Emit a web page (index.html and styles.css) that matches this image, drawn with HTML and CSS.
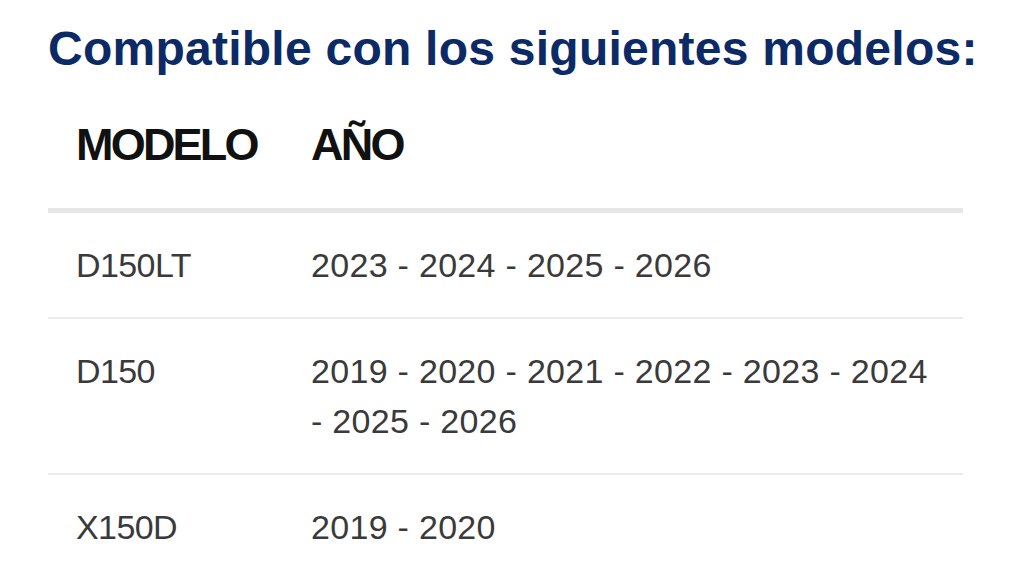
FILE: index.html
```html
<!DOCTYPE html>
<html lang="es">
<head>
<meta charset="utf-8">
<title>Compatible con los siguientes modelos</title>
<link rel="stylesheet" href="styles.css">
</head>
<body>
<section class="compat">
  <h1 class="compat-title">Compatible con los siguientes modelos:</h1>
  <table class="compat-table">
    <thead>
      <tr>
        <th class="col-model">MODELO</th>
        <th class="col-year">AÑO</th>
      </tr>
    </thead>
    <tbody>
      <tr>
        <td class="col-model">D150LT</td>
        <td class="col-year">2023 - 2024 - 2025 - 2026</td>
      </tr>
      <tr>
        <td class="col-model">D150</td>
        <td class="col-year">2019 - 2020 - 2021 - 2022 - 2023 - 2024 - 2025 - 2026</td>
      </tr>
      <tr>
        <td class="col-model">X150D</td>
        <td class="col-year">2019 - 2020</td>
      </tr>
    </tbody>
  </table>
</section>
</body>
</html>
```

FILE: styles.css
```css
html, body {
  margin: 0;
  padding: 0;
  background: #ffffff;
}

body {
  font-family: "Liberation Sans", Arial, sans-serif;
  overflow: hidden;
}

.compat {
  padding: 21px 0 0 48px;
}

.compat-title {
  margin: 0 0 16px 0;
  font-size: 48px;
  line-height: 55px;
  font-weight: 700;
  color: #0c2a66;
  letter-spacing: 0.25px;
  white-space: nowrap;
}

.compat-table {
  width: 915px;
  border-collapse: collapse;
  table-layout: fixed;
}

.compat-table th,
.compat-table td {
  box-sizing: border-box;
  text-align: left;
  vertical-align: top;
  padding: 27px 28px;
}

.compat-table .col-model {
  width: 235px;
}

.compat-table th {
  padding-top: 28px;
  padding-bottom: 38px;
  font-size: 45px;
  line-height: 50px;
  font-weight: 700;
  color: #111111;
  letter-spacing: -2.8px;
  border-bottom: 5px solid #e6e6e6;
}

.compat-table td {
  font-size: 34px;
  line-height: 50px;
  font-weight: 400;
  color: #3a3a3a;
  border-bottom: 2px solid #ececec;
}

.compat-table td.col-model {
  letter-spacing: -0.6px;
}

.compat-table td.col-year {
  letter-spacing: 0.3px;
}

.compat-table tbody tr:last-child td {
  border-bottom: none;
}
```
